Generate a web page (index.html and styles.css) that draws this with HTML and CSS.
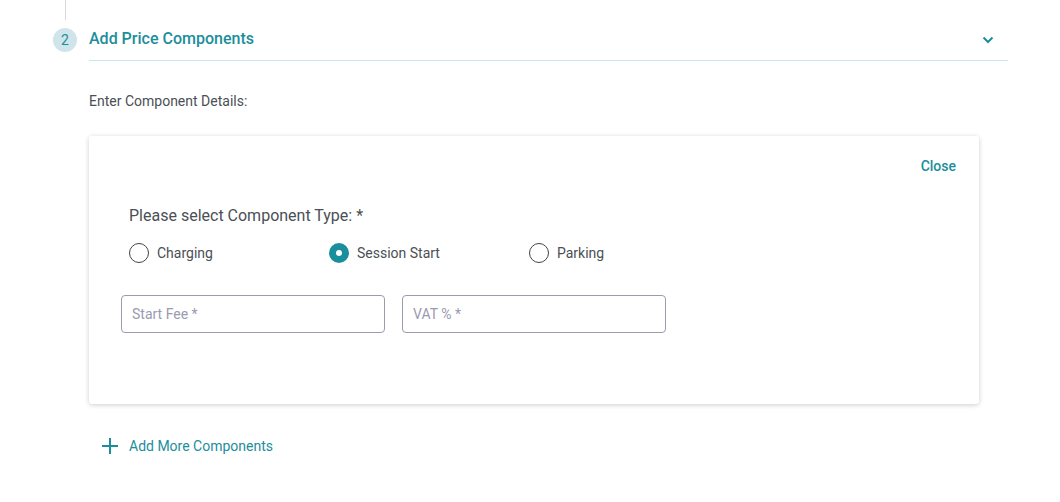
FILE: index.html
```html
<!DOCTYPE html>
<html>
<head>
  <title>Price components</title>
  <link rel="stylesheet" href="styles.css">
</head>
<body>

  <div class="step">
    <div class="step-line"></div>

    <div class="step-head">
      <div class="step-num">2</div>
      <div class="step-title">
        <span>Add Price Components</span>
        <svg class="chevron" width="14" height="14" viewBox="0 0 14 14">
          <path d="M2.5 4.5 L7 9 L11.5 4.5" fill="none" stroke="#1b8e9c" stroke-width="2"/>
        </svg>
      </div>
    </div>

    <div class="step-body">
      <p class="intro">Enter Component Details:</p>

      <!-- component card -->
      <div class="card">
        <div class="card-top">
          <a class="close">Close</a>
        </div>

        <div class="type-label">Please select Component Type: *</div>
        <div class="radios">
          <label class="radio"><span class="dot"></span>Charging</label>
          <label class="radio"><span class="dot on"></span>Session Start</label>
          <label class="radio"><span class="dot"></span>Parking</label>
        </div>

        <div class="fields">
          <input type="text" placeholder="Start Fee *">
          <input type="text" placeholder="VAT % *">
        </div>
      </div>

      <a class="add-more">
        <svg width="16" height="16" viewBox="0 0 16 16">
          <path d="M8 0 V16 M0 8 H16" stroke="#1b8e9c" stroke-width="2"/>
        </svg>
        Add More Components
      </a>
    </div>
  </div>

</body>
</html>
```

FILE: styles.css
```css
body {
  margin: 0;
  background: #fff;
  font-family: Roboto, "Liberation Sans", sans-serif;
  color: #4a5055;
}
.step {
  padding: 0 52px 0 53px;
}
.step-line {
  width: 1px;
  height: 20px;
  margin-left: 12px;
  margin-bottom: 8px;
  background: #d8d8d8;
}
.step-head {
  display: flex;
  align-items: flex-start;
  gap: 12px;
}
.step-num {
  width: 24px;
  height: 24px;
  border-radius: 50%;
  background: #cfe5ea;
  color: #1b8e9c;
  font-size: 14px;
  line-height: 24px;
  text-align: center;
}
.step-title {
  flex: 1;
  display: flex;
  align-items: center;
  justify-content: space-between;
  height: 20px;
  padding-bottom: 12px;
  border-bottom: 1px solid #c9e6ea;
  color: #1b8e9c;
  font-size: 16px;
  font-weight: 500;
}
.chevron {
  margin-right: 13px;
  margin-top: 4px;
}
.step-body {
  padding-left: 36px;
  padding-right: 29px;
}
.intro {
  margin: 31px 0 26px;
  font-size: 14px;
  line-height: 18px;
}
.card {
  background: #fff;
  border-radius: 3px;
  box-shadow: 0 1px 5px rgba(0, 0, 0, 0.2);
  padding: 22px 23px 71px 32px;
}
.card-top {
  display: flex;
  justify-content: flex-end;
}
.close {
  color: #1b8e9c;
  font-size: 14px;
  font-weight: 500;
  line-height: 16px;
  cursor: pointer;
}
.type-label {
  margin: 32px 0 0 8px;
  font-size: 16px;
  line-height: 20px;
}
.radios {
  display: flex;
  margin: 17px 0 0 8px;
}
.radio {
  width: 200px;
  display: flex;
  align-items: center;
  gap: 8px;
  font-size: 14px;
  line-height: 20px;
}
.dot {
  box-sizing: border-box;
  width: 20px;
  height: 20px;
  border-radius: 50%;
  border: 1.5px solid #444;
}
.dot.on {
  border: 7px solid #1b8e9c;
  background: #fff;
}
.fields {
  display: flex;
  gap: 17px;
  margin-top: 32px;
}
.fields input {
  box-sizing: border-box;
  width: 264px;
  height: 38px;
  padding: 0 10px;
  border: 1px solid #9b9bb0;
  border-radius: 4px;
  font-family: Roboto, "Liberation Sans", sans-serif;
  font-size: 14px;
  color: #4a5055;
}
.fields input::placeholder {
  color: #9a9ab0;
}
.add-more {
  display: flex;
  align-items: center;
  gap: 11px;
  margin: 34px 0 0 13px;
  color: #1b8e9c;
  font-size: 14px;
  line-height: 16px;
  cursor: pointer;
}
```
